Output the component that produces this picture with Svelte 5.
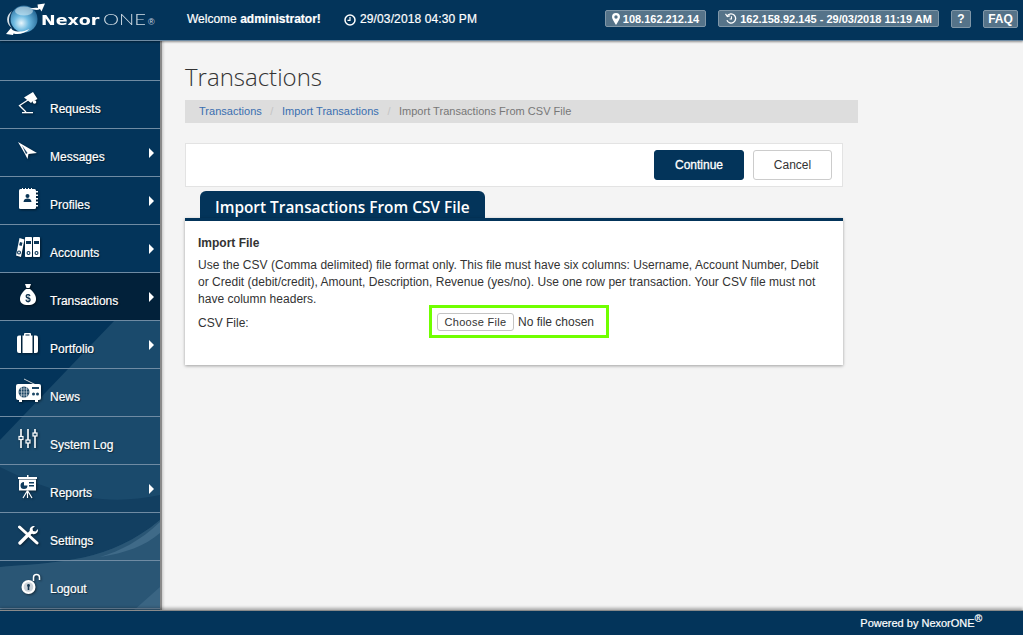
<script>
	const navItems = [
		{ name: 'requests', label: 'Requests' },
		{ name: 'messages', label: 'Messages', more: true },
		{ name: 'profiles', label: 'Profiles', more: true },
		{ name: 'accounts', label: 'Accounts', more: true },
		{ name: 'transactions', label: 'Transactions', more: true, active: true },
		{ name: 'portfolio', label: 'Portfolio', more: true },
		{ name: 'news', label: 'News' },
		{ name: 'systemlog', label: 'System Log' },
		{ name: 'reports', label: 'Reports', more: true },
		{ name: 'settings', label: 'Settings' },
		{ name: 'logout', label: 'Logout' }
	];
</script>

{#snippet navIcon(name)}
	<svg class="nav-icon" viewBox="0 0 30 30" width="30" height="30" fill="#fff" stroke="none">
		{#if name === 'requests'}
			<path d="M10 10.500L19 5l4.500 7-2 1-3 1.500-1.500 1.500z" />
			<circle cx="20.500" cy="15" r="1.800" />
			<path d="M14 13L5.500 18.500 12 25" fill="none" stroke="#fff" stroke-width="1.300" />
			<path d="M8 25h11v1.300H8z" />
		{:else if name === 'messages'}
			<path d="M4 7l19 11-8.500 1-1 5-2.500-5z" />
			<path d="M8 10.500l4 8.500 1.500-1z" fill="#1a4263" />
		{:else if name === 'profiles'}
			<rect x="5" y="6" width="17" height="20" rx="1.500" />
			<path d="M22 8h2v1.500h-2zM22 11.500h2V13h-2zM22 15h2v1.500h-2zM22 18.500h2V20h-2zM22 22h2v1.500h-2z" />
			<path d="M8 5h1v2H8zM11 5h1v2h-1zM14 5h1v2h-1zM17 5h1v2h-1z" />
			<circle cx="13.500" cy="13" r="2" fill="#0a3556" />
			<path d="M9.500 19c0-2.500 2-3.500 4-3.500s4 1 4 3.500z" fill="#0a3556" />
		{:else if name === 'accounts'}
			<path d="M5.500 7l5 1.500L7 26l-5-1.500z" />
			<rect x="11" y="6" width="7" height="20" rx=".8" />
			<rect x="19" y="6" width="7" height="20" rx=".8" />
			<g fill="#0a3556">
				<path d="M12 10h5v3h-5zM20 10h5v3h-5z" />
				<circle cx="14.500" cy="22" r="2" />
				<circle cx="22.500" cy="22" r="2" />
				<circle cx="5" cy="21.500" r="2" />
				<path d="M6 11l2.500.7-.9 3.300-2.500-.7z" />
			</g>
			<circle cx="14.500" cy="22" r=".9" />
			<circle cx="22.500" cy="22" r=".9" />
			<circle cx="5" cy="21.500" r=".9" />
		{:else if name === 'transactions'}
			<path d="M11 5h6l-1.500 4h-3z" />
			<path d="M12 10h4c3 2.500 6 6 6 10 0 4-3 6-8 6s-8-2-8-6c0-4 3-7.500 6-10z" />
			<text x="14" y="22.500" class="dollar" text-anchor="middle">$</text>
		{:else if name === 'portfolio'}
			<path d="M3 10.500a2 2 0 0 1 2-2h2V26H5a2 2 0 0 1-2-2z" />
			<path d="M8.500 8.500H10V7a1 1 0 0 1 1-1h5a1 1 0 0 1 1 1v1.500h1.500V26h-10zM11.500 8.500h4V7.500h-4z" fill-rule="evenodd" />
			<path d="M20 8.500h2a2 2 0 0 1 2 2V24a2 2 0 0 1-2 2h-2z" />
		{:else if name === 'news'}
			<path d="M10 4l11 5.500" stroke="#fff" stroke-width=".8" fill="none" />
			<rect x="2" y="9" width="25" height="16" rx="2" />
			<path d="M5 25h3v2H5zM21 25h3v2h-3z" />
			<circle cx="10" cy="17" r="5.500" fill="#1c4766" />
			<path d="M4.500 17h11M10 11.500v11M5.500 14h9M5.500 20h9M7.500 12v10M12.500 12v10" stroke="#fff" stroke-width=".5" />
			<rect x="18" y="12" width="7" height="2" fill="#1c4766" />
			<circle cx="19.500" cy="19" r="1.500" fill="#1c4766" />
			<circle cx="23.500" cy="19" r="1.500" fill="#1c4766" />
		{:else if name === 'systemlog'}
			<g fill="none" stroke="#fff" stroke-width="1.600">
				<path d="M7 6v19M14 6v19M21 6v19" />
				<rect x="5" y="13.500" width="4" height="3" fill="#1c4766" stroke-width="1.200" />
				<rect x="12" y="17" width="4" height="3" fill="#1c4766" stroke-width="1.200" />
				<rect x="19" y="10" width="4" height="3" fill="#1c4766" stroke-width="1.200" />
			</g>
		{:else if name === 'reports'}
			<path d="M13 4h1.500v2H13zM4 6h19v2H4z" />
			<path d="M5 8.500h17v11H5z" />
			<path d="M10 11a3.500 3.500 0 1 0 3.500 3.500H10z" fill="#0f3c5e" />
			<path d="M15 11h5v1.500h-5zM15 14h5v1.500h-5z" fill="#0f3c5e" />
			<path d="M13.500 19.500L9 27M13.500 19.500v7.500M13.500 19.500L18 27" stroke="#fff" stroke-width="1.200" fill="none" />
		{:else if name === 'settings'}
			<path d="M5.500 8L23 24" stroke="#fff" stroke-width="3" stroke-linecap="round" />
			<path d="M6 24L17 13" stroke="#fff" stroke-width="3.400" stroke-linecap="round" />
			<path d="M16 12.500c-1-3 1-6 5-5.500l-2.500 2.500.5 2.500 2.500.5L24 10c.5 3.500-2.500 6-5.500 5z" />
		{:else if name === 'logout'}
			<path d="M19.500 14V10.500a3 3 0 0 1 6 0V13" fill="none" stroke="#fff" stroke-width="1.500" />
			<circle cx="14.500" cy="20" r="7" />
			<circle cx="14.500" cy="20" r="4.800" fill="#c9d1d8" />
			<circle cx="14.500" cy="18.500" r="1.400" fill="#12344f" />
			<path d="M13.700 19h1.600v4h-1.600z" fill="#12344f" />
		{/if}
	</svg>
{/snippet}

<div class="page">
	<header class="topbar">
		<div class="logo">
			<svg class="globe" viewBox="0 0 40 34" width="40" height="34">
				<defs>
					<radialGradient id="ball" cx="0.4" cy="0.65" r="0.7">
						<stop offset="0" stop-color="#e8f6fc" />
						<stop offset="0.4" stop-color="#6db9e0" />
						<stop offset="1" stop-color="#1d5f8e" />
					</radialGradient>
				</defs>
				<circle cx="18" cy="16" r="13.500" fill="url(#ball)" />
				<ellipse cx="18" cy="8" rx="9" ry="4.500" fill="#dff1f8" opacity=".55" />
				<path d="M24 5.500c3-.5 5.500-1 8-.5l-.5-3.500L39 .5l-3.500 8-1.500-2.500c-3 2-6.500.5-10-.5z" fill="#fff" />
				<path d="M0 31l5-6 1.500 2c5 2.500 11 2 17-1-4.500 4.500-11 6-16 4.500l-.5 1.500z" fill="#fff" />
				<path d="M6 8C2 14 2 20 6 25 0 21-1 13 6 8z" fill="#fff" opacity=".85" />
			</svg>
			<span class="logo-text"><span class="nexor">Nexor</span><span class="one">ONE</span><sup>®</sup></span>
		</div>
		<div class="welcome">Welcome <b>administrator!</b></div>
		<div class="clock">
			<svg viewBox="0 0 12 12" width="12" height="12" fill="none" stroke="#fff" stroke-width="1.500">
				<circle cx="6" cy="6" r="5" />
				<path d="M6 3v3.300H3.500" stroke-width="1.200" />
			</svg>
			<span>29/03/2018 04:30 PM</span>
		</div>
		<div class="badges">
			<span class="badge">
				<svg viewBox="0 0 8 12" width="8" height="12" fill="#fff">
					<path fill-rule="evenodd" d="M4 0a4 4 0 0 1 4 4c0 2-2.500 5.500-4 8C2.500 9.500 0 6 0 4a4 4 0 0 1 4-4zm0 2.300a1.700 1.700 0 1 0 0 3.400 1.700 1.700 0 0 0 0-3.400z" />
				</svg>
				108.162.212.14
			</span>
			<span class="badge wide">
				<svg viewBox="0 0 13 12" width="12" height="11" fill="none" stroke="#fff" stroke-width="1.400">
					<path d="M2.500 3A5 5 0 1 1 2 8" />
					<path d="M0.500 1l2 3 3-1" stroke-width="1.200" />
					<path d="M7 3.500V6.500H5" stroke-width="1.200" />
				</svg>
				162.158.92.145 - 29/03/2018 11:19 AM
			</span>
			<span class="badge square">?</span>
			<span class="badge square faq">FAQ</span>
		</div>
	</header>

	<div class="middle">
		<aside class="sidebar">
			<svg class="swoosh" viewBox="0 0 160 570" preserveAspectRatio="none" aria-hidden="true">
				<path d="M160 235L115 279 0 399V570H160z" fill="#1a4a6c" />
				<path d="M0 426C50 451 100 467 160 454V479C110 521 60 521 0 526z" fill="#123f61" />
				<path d="M0 526C60 521 110 521 160 479V570H0z" fill="#2a5675" />
				<path d="M160 481C140 500 120 510 100 516 125 512 145 505 160 492z" fill="#3f6a88" />
				<path d="M133 570L160 546V570z" fill="#3a6583" />
			</svg>
			<nav class="nav">
				{#each navItems as item}
					<a class="nav-item" class:active={item.active} href="#top">
						{@render navIcon(item.name)}
						<span class="nav-label">{item.label}</span>
						{#if item.more}<span class="caret"></span>{/if}
					</a>
				{/each}
			</nav>
		</aside>

		<main class="content">
			<h1>Transactions</h1>
			<div class="breadcrumb">
				<a href="#top">Transactions</a>
				<span class="sep">/</span>
				<a href="#top">Import Transactions</a>
				<span class="sep">/</span>
				<span class="current">Import Transactions From CSV File</span>
			</div>

			<div class="toolbar">
				<button class="btn primary">Continue</button>
				<button class="btn">Cancel</button>
			</div>

			<div class="tab">Import Transactions From CSV File</div>
			<section class="panel">
				<h2>Import File</h2>
				<p>Use the CSV (Comma delimited) file format only. This file must have six columns: Username, Account Number, Debit or Credit (debit/credit), Amount, Description, Revenue (yes/no). Use one row per transaction. Your CSV file must not have column headers.</p>
				<div class="field">
					<label for="csv">CSV File:</label>
					<div class="highlight">
						<input id="csv" type="file" />
					</div>
				</div>
			</section>
		</main>
	</div>

	<footer class="footer">
		<span>Powered by NexorONE<sup>®</sup></span>
	</footer>
</div>

<style>
	:global(body) {
		margin: 0;
		background: #f4f4f4;
	}

	.page {
		display: flex;
		flex-direction: column;
		height: 635px;
		overflow: hidden;
		font-family: 'Liberation Sans', Arial, sans-serif;
		font-size: 12px;
		color: #333;
	}

	/* top bar */
	.topbar {
		display: flex;
		align-items: flex-start;
		flex: none;
		height: 40px;
		background: #03345a;
		border-bottom: 1px solid #6f8ba3;
		color: #fff;
		box-shadow: 0 1px 2px rgba(0, 0, 0, 0.4);
		position: relative;
		z-index: 2;
	}

	.logo {
		display: flex;
		align-items: flex-start;
		width: 187px;
		flex: none;
		padding-left: 6px;
		box-sizing: border-box;
	}

	.globe {
		margin-top: 3px;
		flex: none;
	}

	.logo-text {
		margin: 10px 0 0 -5px;
		display: flex;
		align-items: baseline;
		line-height: 18px;
		white-space: nowrap;
	}

	.nexor {
		display: inline-block;
		width: 62px;
		font-family: 'DejaVu Sans', sans-serif;
		font-weight: 700;
		font-size: 14px;
		transform: scaleX(1.25);
		transform-origin: left;
	}

	.one {
		display: inline-block;
		width: 45px;
		font-family: Lato, sans-serif;
		font-weight: 300;
		font-size: 15px;
		transform: scaleX(1.35);
		transform-origin: left;
		color: #d5dfe7;
	}

	.logo-text sup {
		font-size: 9px;
		line-height: 0;
		vertical-align: 5px;
		color: #cfd9e2;
	}

	.welcome {
		margin-top: 12px;
		width: 157px;
		flex: none;
		font-size: 12px;
		line-height: 15px;
		-webkit-text-stroke: 0.2px #fff;
	}

	.clock {
		margin-top: 12px;
		display: flex;
		align-items: center;
		gap: 4px;
		line-height: 15px;
		letter-spacing: 0.12px;
		-webkit-text-stroke: 0.2px #fff;
	}

	.badges {
		margin-left: auto;
		margin-right: 5px;
		margin-top: 10px;
		display: flex;
		align-items: flex-start;
		gap: 12px;
	}

	.badge {
		display: flex;
		align-items: center;
		justify-content: center;
		gap: 3px;
		box-sizing: border-box;
		width: 101px;
		height: 17px;
		background: #557389;
		border: 1px solid #8097a8;
		border-radius: 2px;
		font-size: 11px;
		font-weight: 700;
		color: #fff;
	}

	.badge.wide {
		width: 221px;
	}

	.badge.square {
		width: 20px;
		height: 18px;
		font-size: 12px;
	}

	.badge.faq {
		width: 35px;
	}

	/* side navigation */
	.middle {
		display: flex;
		flex: 1;
		min-height: 0;
	}

	.sidebar {
		position: relative;
		flex: none;
		width: 160px;
		box-sizing: content-box;
		padding-top: 39px;
		background: #03345a;
		border-right: 2px solid #8a8a8a;
		overflow: hidden;
	}

	.swoosh {
		position: absolute;
		left: 0;
		top: 0;
		width: 160px;
		height: 570px;
	}

	.nav {
		position: relative;
		border-bottom: 1px solid #6f8ba3;
		height: 528px;
	}

	.nav-item {
		display: flex;
		align-items: flex-start;
		box-sizing: border-box;
		height: 48px;
		border-top: 1px solid #6f8ba3;
		padding-left: 14px;
		color: #fff;
		text-decoration: none;
	}

	.nav-item.active {
		background: #02213a;
	}

	.nav-icon {
		flex: none;
		margin-top: 6px;
		filter: drop-shadow(1px 1px 1px rgba(0, 0, 0, 0.5));
	}

	.dollar {
		font-family: 'Liberation Sans', sans-serif;
		font-size: 10px;
		font-weight: 700;
		fill: #0a2f4c;
	}

	.nav-label {
		margin: 21px 0 0 6px;
		font-size: 12px;
		line-height: 14px;
		-webkit-text-stroke: 0.2px #fff;
		text-shadow: 1px 1px 1px rgba(0, 0, 0, 0.5);
	}

	.caret {
		align-self: center;
		margin-left: auto;
		margin-right: 6px;
		width: 0;
		height: 0;
		border-left: 5px solid #fff;
		border-top: 5px solid transparent;
		border-bottom: 5px solid transparent;
	}

	/* main content */
	.content {
		flex: 1;
		min-width: 0;
		padding: 0 180px 0 23px;
		background: #f4f4f4;
		box-shadow: inset 3px 0 3px -2px rgba(0, 0, 0, 0.2);
	}

	h1 {
		margin: 22px 0 0;
		font-family: 'Open Sans', sans-serif;
		font-weight: 300;
		font-size: 24px;
		line-height: 27px;
		color: #333;
	}

	.breadcrumb {
		display: flex;
		align-items: center;
		height: 23px;
		margin-top: 10px;
		width: 673px;
		padding: 0 0 2px 14px;
		box-sizing: border-box;
		background: #dddddd;
		font-size: 11px;
		letter-spacing: 0.02px;
	}

	.breadcrumb a {
		color: #3a6fb0;
		text-decoration: none;
	}

	.sep {
		margin: 0 8.5px;
		color: #c4c4c4;
	}

	.current {
		color: #777;
	}

	.toolbar {
		display: flex;
		justify-content: flex-end;
		align-items: center;
		gap: 9px;
		box-sizing: border-box;
		width: 658px;
		height: 44px;
		margin-top: 20px;
		padding-right: 10px;
		background: #fff;
		border: 1px solid #e3e3e3;
	}

	.btn {
		box-sizing: border-box;
		width: 79px;
		height: 30px;
		padding: 0;
		background: #fff;
		border: 1px solid #ccc;
		border-radius: 3px;
		font-family: inherit;
		font-size: 12px;
		color: #333;
	}

	.btn.primary {
		width: 90px;
		background: #03345a;
		border-color: #03345a;
		color: #fff;
		-webkit-text-stroke: 0.3px #fff;
	}

	.tab {
		width: 285px;
		height: 27px;
		margin: 4px 0 0 15px;
		padding-left: 15px;
		box-sizing: border-box;
		background: #03345a;
		border-radius: 6px 6px 0 0;
		font-family: 'Open Sans', sans-serif;
		font-size: 15.4px;
		font-weight: 600;
		line-height: 34px;
		color: #fff;
		overflow: hidden;
	}

	.panel {
		box-sizing: border-box;
		width: 658px;
		height: 147px;
		padding: 14px 13px 0;
		background: #fff;
		border-top: 3px solid #03345a;
		box-shadow: 0 1px 3px rgba(0, 0, 0, 0.35);
	}

	h2 {
		margin: 0;
		font-size: 12px;
		line-height: 17px;
		font-weight: 700;
		color: #333;
	}

	p {
		margin: 5px 0 0;
		line-height: 17px;
		letter-spacing: 0.02px;
	}

	.field {
		display: flex;
		align-items: flex-start;
		margin-top: -3px;
	}

	label {
		width: 231px;
		flex: none;
		line-height: 17px;
		margin-top: 10px;
	}

	.highlight {
		display: flex;
		align-items: center;
		box-sizing: border-box;
		width: 180px;
		height: 33px;
		padding: 1px 0 0 5px;
		border: 3px solid #70ff00;
	}

	input[type='file'] {
		width: 168px;
		font-family: 'Liberation Sans', Arial, sans-serif;
		font-size: 12px;
		color: #333;
	}

	input[type='file']::file-selector-button {
		box-sizing: border-box;
		width: 77px;
		height: 18px;
		margin-right: 4px;
		padding: 0;
		background: #fff;
		border: 1px solid #c4c4c4;
		border-radius: 3px;
		font-family: inherit;
		font-size: 11px;
		letter-spacing: 0.3px;
		color: #333;
	}

	/* footer */
	.footer {
		flex: none;
		display: flex;
		justify-content: flex-end;
		align-items: center;
		height: 24px;
		padding-right: 41px;
		background: #03345a;
		border-top: 1px solid #8a8a8a;
		box-shadow: 0 -2px 3px rgba(0, 0, 0, 0.3);
		color: #fff;
		position: relative;
		font-size: 11px;
		-webkit-text-stroke: 0.2px #fff;
	}

	.footer sup {
		font-size: 10px;
		line-height: 0;
	}
</style>
